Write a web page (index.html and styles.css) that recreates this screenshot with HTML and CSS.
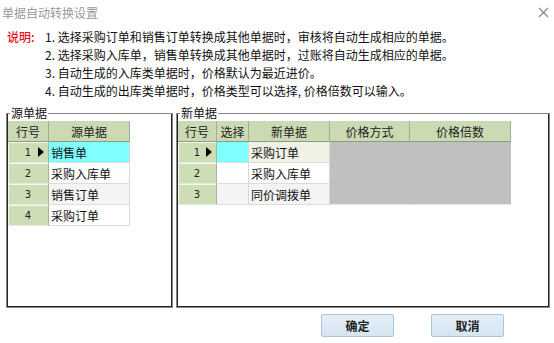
FILE: index.html
```html
<!DOCTYPE html>
<html lang="zh-CN">
  <head>
    <meta charset="UTF-8" />
    <title>单据自动转换设置</title>
    <link rel="stylesheet" href="styles.css">
  </head>
  <body>
    <div class="titlebar">
      <span class="title">单据自动转换设置</span>
      <svg class="close" width="11" height="11" viewBox="0 0 11 11">
        <line x1="1" y1="1" x2="10" y2="10" stroke="#888" stroke-width="1.3" />
        <line x1="10" y1="1" x2="1" y2="10" stroke="#888" stroke-width="1.3" />
      </svg>
    </div>

    <div class="notes">
      <div class="notes-label">说明:</div>
      <div class="notes-lines">
        <div>1. 选择采购订单和销售订单转换成其他单据时，审核将自动生成相应的单据。</div>
        <div>2. 选择采购入库单，销售单转换成其他单据时，过账将自动生成相应的单据。</div>
        <div>3. 自动生成的入库类单据时，价格默认为最近进价。</div>
        <div>4. 自动生成的出库类单据时，价格类型可以选择, 价格倍数可以输入。</div>
      </div>
    </div>

    <div class="groups">
      <fieldset class="group group-src">
        <legend>源单据</legend>
        <table class="grid">
          <tr>
            <th class="c-no">行号</th>
            <th class="c-bill">源单据</th>
          </tr>
          <tr>
            <td class="rowno">1<span class="arrow"></span></td>
            <td class="cell cur">销售单</td>
          </tr>
          <tr>
            <td class="rowno">2</td>
            <td class="cell">采购入库单</td>
          </tr>
          <tr>
            <td class="rowno">3</td>
            <td class="cell alt">销售订单</td>
          </tr>
          <tr>
            <td class="rowno">4</td>
            <td class="cell">采购订单</td>
          </tr>
        </table>
      </fieldset>

      <fieldset class="group group-new">
        <legend>新单据</legend>
        <table class="grid">
          <tr>
            <th class="c-no2">行号</th>
            <th class="c-sel">选择</th>
            <th class="c-bill">新单据</th>
            <th class="c-way">价格方式</th>
            <th class="c-rate">价格倍数</th>
          </tr>
          <tr>
            <td class="rowno">1<span class="arrow"></span></td>
            <td class="cell cur"></td>
            <td class="cell sel">采购订单</td>
            <td class="cell off"></td>
            <td class="cell off"></td>
          </tr>
          <tr>
            <td class="rowno">2</td>
            <td class="cell"></td>
            <td class="cell">采购入库单</td>
            <td class="cell off"></td>
            <td class="cell off"></td>
          </tr>
          <tr>
            <td class="rowno">3</td>
            <td class="cell alt"></td>
            <td class="cell alt">同价调拨单</td>
            <td class="cell off"></td>
            <td class="cell off"></td>
          </tr>
        </table>
      </fieldset>
    </div>

    <div class="buttons">
      <button class="btn">确定</button>
      <button class="btn">取消</button>
    </div>
  </body>
</html>
```

FILE: styles.css
```css
body {
  margin: 0;
  background-color: #fff;
  color: #111;
  font-family: "Noto Sans CJK SC", "DejaVu Sans", sans-serif;
  font-size: 12px;
}
.titlebar {
  height: 24px;
  display: flex;
  align-items: center;
  justify-content: space-between;
  padding: 0 5px 0 2px;
}
.title {
  color: #999;
  font-size: 12px;
}
.close {
  display: block;
  flex-shrink: 0;
}
.notes {
  display: flex;
  margin-top: 4px;
  padding-left: 7px;
  line-height: 18px;
}
.notes-label {
  width: 38px;
  color: #e8101c;
  font-weight: 500;
}
.notes-lines {
  color: #111;
}
.groups {
  display: flex;
  gap: 3px;
  margin-top: 6px;
  padding-left: 6px;
}
.group {
  margin: 0;
  padding: 0;
  height: 202px;
  box-sizing: border-box;
  border: 1px solid #888;
  box-shadow: inset 1px 0 #222, inset -1px 0 #222, inset 0 -1px #222;
}
.group legend {
  margin-left: 3px;
  padding: 0 1px;
  line-height: 14px;
  font-size: 12px;
}
.group-src {
  width: 167px;
}
.group-new {
  width: 374px;
}
.grid {
  border-collapse: separate;
  border-spacing: 0;
  margin: 1px 0 0 1px;
  table-layout: fixed;
}
.grid th {
  height: 20px;
  padding: 0;
  background-color: #cbdab3;
  border-right: 1px solid #9fae96;
  border-bottom: 1px solid #8c9c84;
  font-weight: normal;
  text-align: center;
  color: #222;
}
.grid td {
  height: 20px;
  padding: 0;
  border-bottom: 1px solid #dcdcdc;
}
.c-no {
  width: 40px;
}
.c-no2 {
  width: 38px;
}
.c-sel {
  width: 31px;
}
.c-bill {
  width: 80px;
}
.c-way {
  width: 79px;
}
.c-rate {
  width: 100px;
}
.rowno {
  position: relative;
  background-color: #cdddb6;
  box-shadow: inset 1px 1px #f4f8ee;
  border-right: 1px solid #a8b4a0;
  text-align: center;
  font-family: "DejaVu Sans", sans-serif;
  font-size: 10px;
  color: #222;
}
.grid td.rowno {
  border-bottom: 1px solid #e6ebe0;
}
.arrow {
  position: absolute;
  right: 4px;
  top: 5px;
  width: 0;
  height: 0;
  border-top: 5px solid transparent;
  border-bottom: 5px solid transparent;
  border-left: 6px solid #000;
}
.cell {
  border-right: 1px solid #d8d8d8;
  background-color: #fff;
  white-space: nowrap;
  overflow: hidden;
}
.grid td.cell {
  padding-left: 2px;
}
.cur {
  background-color: #80ffff;
}
.sel {
  background-color: #f1f1e6;
}
.alt {
  background-color: #f4f4f4;
}
.grid td.off {
  background-color: #c0c0c0;
  border-right-color: #c0c0c0;
  border-bottom-color: #c0c0c0;
}
.grid tr:last-child td.off {
  border-bottom-color: #e8e8e8;
}
.buttons {
  display: flex;
  justify-content: flex-end;
  gap: 37px;
  margin-top: 6px;
  padding-right: 50px;
}
.btn {
  width: 73px;
  height: 23px;
  padding: 0;
  border: 1px solid #a9c6da;
  border-radius: 2px;
  background: linear-gradient(#e4eef7, #d6e5f2);
  font-family: "Noto Sans CJK SC", sans-serif;
  font-size: 12px;
  font-weight: bold;
  color: #222;
}
```
